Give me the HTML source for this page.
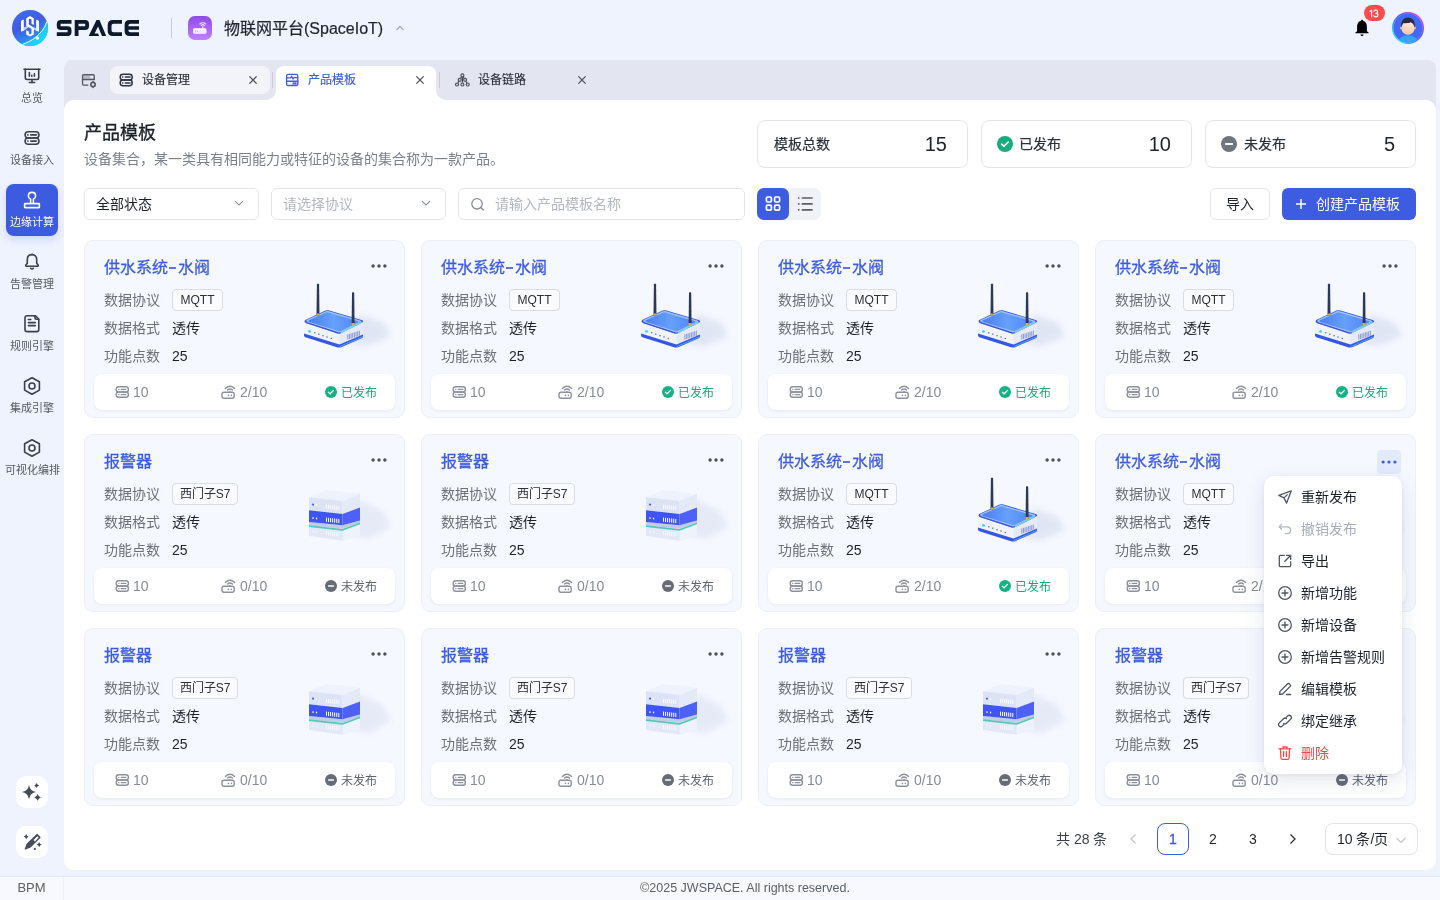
<!DOCTYPE html>
<html lang="zh-CN">
<head>
<meta charset="utf-8">
<style>
*{box-sizing:border-box;margin:0;padding:0}
html,body{width:1440px;height:900px;overflow:hidden}
body{position:relative;background:#eff3fe;font-family:"Liberation Sans",sans-serif;color:#1d2129;font-size:14px;line-height:1}
.abs{position:absolute}
svg{display:block}
.side-label{position:absolute;left:0;width:64px;text-align:center;font-size:11px;color:#535862;line-height:12px}
.side-ico{position:absolute;left:20px;width:24px;height:24px}
.stat{position:absolute;top:120px;width:211px;height:48px;border:1px solid #e3e4f0;border-radius:8px;background:#fff}
.stat-l{position:absolute;top:15px;font-size:14px;line-height:16px;color:#2b2f36;-webkit-text-stroke:.2px #2b2f36}
.stat-n{position:absolute;right:20px;top:13px;font-size:20px;line-height:20px;color:#1d2129}
.sel{position:absolute;top:188px;width:175px;height:32px;border:1px solid #e1e3ee;border-radius:6px;background:#fff;font-size:14px;line-height:30px;padding-left:11px}
.card{position:absolute;width:321px;height:178px;border-radius:9px;background:#f5f8ff;border:1px solid #eceffb}
.card .ct{position:absolute;left:19px;top:17px;font-size:16px;line-height:20px;color:#3d5ce0;-webkit-text-stroke:.3px #3d5ce0;white-space:nowrap}
.card .more{position:absolute;left:282px;top:13px;width:24px;height:24px;border-radius:4px}
.card .lb{position:absolute;left:19px;margin-top:-2px;font-size:14px;line-height:16px;color:#6b7079}
.card .vl{position:absolute;left:87px;margin-top:-2px;font-size:14px;line-height:16px;color:#1d2129}
.card .tag{position:absolute;left:87px;top:48px;height:22px;border:1px solid #d9dce5;border-radius:4px;font-size:12px;line-height:20px;text-align:center;color:#2b2f36;background:#f9fbff}
.card .cf{position:absolute;left:9px;top:133px;width:301px;height:36px;border-radius:8px;background:#fff;box-shadow:0 1px 3px rgba(40,50,90,.08)}
.mi{position:absolute;left:0;width:138px;height:32px;padding-left:37px;font-size:14px;line-height:32px;color:#1d2129;white-space:nowrap}
.mic{position:absolute;left:13px;top:8px;width:16px;height:16px}
</style>
</head>
<body style="will-change:transform">

<!-- HEADER -->
<div class="abs" style="left:12px;top:10px;width:36px;height:36px">
<svg width="36" height="36" viewBox="0 0 36 36">
<defs>
<linearGradient id="lg1" x1="0.25" y1="0" x2="0.75" y2="1">
<stop offset="0" stop-color="#3b6eec"/><stop offset="0.4" stop-color="#4359e2"/><stop offset="0.7" stop-color="#2f86ee"/><stop offset="1" stop-color="#17c9f6"/></linearGradient>
<linearGradient id="lg2" x1="0" y1="0" x2="1" y2="1"><stop offset="0" stop-color="#2aa8f2"/><stop offset="1" stop-color="#0ef0fb"/></linearGradient>
<clipPath id="lgc"><circle cx="18" cy="18" r="18"/></clipPath>
</defs>
<circle cx="18" cy="18" r="18" fill="url(#lg1)"/>
<path clip-path="url(#lgc)" d="M10.9 34.2 C18 32 31 24.5 34.8 11.6 L40 11 L40 40 L8 40 Z" fill="url(#lg2)"/>
<path d="M10.9 34.2 C18 32 31 24.5 34.8 11.6" stroke="#fff" stroke-width="1" fill="none"/>
<circle cx="25.3" cy="28" r="1.8" fill="#fff"/>
<g fill="#fff">
<path d="M18 6 L21.8 8.2 L21.8 15 L19.5 13.7 L19.5 9.4 L18 8.6 L16.8 9.3 L16.8 14.6 L21.8 17.4 L21.8 24.4 L18 26.6 L14.2 24.4 L14.2 20.2 L16.8 21.6 L16.8 23.7 L18 24.4 L19.5 23.6 L19.5 18.8 L14.2 15.8 L14.2 8.2 Z"/>
<path d="M9 11 L10.8 9.7 L11.8 9.7 L11.8 20.8 L9 21.8 Z"/>
<path d="M24.2 9.7 L25.2 9.7 L27 11 L27 21.8 L24.2 20.8 Z"/>
<path d="M11.8 17.6 L16.2 15.4 L16.2 17.6 L11.8 20.8 Z" opacity=".7"/>
<path d="M21.8 17.2 L24.2 18.4 L24.2 20.8 L21.8 19.6 Z" opacity=".7"/>
</g>
</svg>
</div>
<div class="abs" style="left:56px;top:20px;width:84px;height:16px">
<svg width="84" height="16" viewBox="0 0 84 16" fill="#0c1a2c">
<path d="M15.5 0 L4.8 0 Q0.8 0 0.8 4 L0.8 6.2 Q0.8 10 4.8 10 L11.6 10 L11.6 12.2 L0.8 12.2 L0.8 16 L11.6 16 Q15.5 16 15.5 12 L15.5 10.2 Q15.5 6.3 11.6 6.3 L4.6 6.3 L4.6 3.8 L15.5 3.8 Z"/>
<path fill-rule="evenodd" d="M18.7 0 L29 0 Q33 0 33 4 L33 6 Q33 10 29 10 L22.5 10 L22.5 16 L18.7 16 Z M22.5 3.8 L29.2 3.8 L29.2 6.2 L22.5 6.2 Z"/>
<path d="M40.5 0 L43.5 0 L50.2 16 L46 16 L42 6.5 L38.6 13.5 L42 13.5 L43 16 L32.7 16 Z"/>
<path d="M66 0 L57 0 Q51.7 0 51.7 5 L51.7 11 Q51.7 16 57 16 L66 16 L66 12.2 L57.5 12.2 Q55.5 12.2 55.5 10.2 L55.5 5.8 Q55.5 3.8 57.5 3.8 L66 3.8 Z"/>
<path d="M83 0 L73.6 0 Q68.6 0 68.6 5 L68.6 11 Q68.6 16 73.6 16 L83 16 L83 12.2 L74.4 12.2 Q72.4 12.2 72.4 10.2 L72.4 9.8 L83 9.8 L83 6.3 L72.4 6.3 L72.4 5.8 Q72.4 3.8 74.4 3.8 L83 3.8 Z"/>
</svg>
</div>
<div class="abs" style="left:171px;top:18px;width:1px;height:20px;background:#c9ccd6"></div>
<div class="abs" style="left:188px;top:16px;width:24px;height:24px;border-radius:7px;background:linear-gradient(180deg,#8d4ae8,#c282f4)">
<svg width="24" height="24" viewBox="0 0 24 24">
<defs><linearGradient id="pbox" x1="0" y1="0" x2="0" y2="1"><stop offset="0" stop-color="#fff"/><stop offset="1" stop-color="#f3dcfb"/></linearGradient></defs>
<rect x="5" y="12.3" width="13.5" height="5.6" rx="1.6" fill="url(#pbox)"/>
<circle cx="7.4" cy="15.1" r=".55" fill="#b98af0"/><circle cx="9.4" cy="15.1" r=".55" fill="#b98af0"/>
<path d="M14.8 12.4 V10.2" stroke="#f2e6fc" stroke-width="1.3"/>
<path d="M13.3 9.3 A2.1 2.1 0 0 1 16.3 9.3 M11.9 8 A4 4 0 0 1 17.7 8" stroke="#f2e6fc" stroke-width="1.1" fill="none" stroke-linecap="round"/>
</svg>
</div>
<div class="abs" style="left:224px;top:19px;font-size:16px;line-height:20px;color:#1f232b;-webkit-text-stroke:.2px #1f232b;white-space:nowrap">物联网平台(SpaceIoT)</div>
<svg class="abs" style="left:395px;top:24px" width="10" height="8" viewBox="0 0 10 8"><path d="M1.5 6 L5 2.5 L8.5 6" stroke="#a8acb5" stroke-width="1.3" fill="none"/></svg>

<!-- bell -->
<svg class="abs" style="left:1354px;top:19px" width="16" height="18" viewBox="0 0 16 18">
<path d="M8 0.8 C8.6 0.8 9 1.2 9 1.8 C11.6 2.4 12.9 4.6 12.9 7.5 L12.9 12.3 L14.6 13.6 C14.9 13.8 14.8 14.3 14.4 14.3 L1.6 14.3 C1.2 14.3 1.1 13.8 1.4 13.6 L3.1 12.3 L3.1 7.5 C3.1 4.6 4.4 2.4 7 1.8 C7 1.2 7.4 0.8 8 0.8 Z" fill="#000"/>
<path d="M6.4 15.4 L9.6 15.4 C9.5 16.3 8.8 16.9 8 16.9 C7.2 16.9 6.5 16.3 6.4 15.4 Z" fill="#000"/>
</svg>
<div class="abs" style="left:1364px;top:5px;width:21px;height:16px;border-radius:8px;background:#fb4b4b">
<svg width="21" height="16" viewBox="0 0 21 16" fill="none" stroke="#fff" stroke-width="1.15" stroke-linecap="round" stroke-linejoin="round">
<path d="M6.2 6.3 L7.6 5.2 V11.8"/>
<path d="M10 6.2 Q10.5 5.1 11.9 5.1 Q13.6 5.1 13.6 6.7 Q13.6 8.3 11.8 8.3 Q13.9 8.3 13.9 10.1 Q13.9 11.9 11.9 11.9 Q10.3 11.9 9.8 10.7"/>
</svg></div>
<!-- avatar -->
<svg class="abs" style="left:1392px;top:12px" width="32" height="32" viewBox="0 0 32 32">
<defs>
<linearGradient id="ring" x1="0.1" y1="0.9" x2="0.9" y2="0.1"><stop offset="0" stop-color="#1ef5e6"/><stop offset=".4" stop-color="#4a7cf7"/><stop offset=".6" stop-color="#6060f5"/><stop offset="1" stop-color="#f23cf0"/></linearGradient>
<linearGradient id="skin" x1="0" y1="0" x2="0" y2="1"><stop offset="0" stop-color="#fde9dc"/><stop offset="1" stop-color="#f9c7ab"/></linearGradient>
<clipPath id="avc"><circle cx="16" cy="16" r="14.6"/></clipPath>
</defs>
<circle cx="16" cy="16" r="15.2" fill="none" stroke="url(#ring)" stroke-width="1.7"/>
<g clip-path="url(#avc)">
<rect width="32" height="32" fill="#4469f7"/>
<ellipse cx="16" cy="31.6" rx="10.6" ry="8.4" fill="#38a3fb"/>
<circle cx="9.3" cy="16" r="1.3" fill="#f6b896"/><circle cx="22.7" cy="16" r="1.3" fill="#f6b896"/>
<ellipse cx="16" cy="16" rx="6.6" ry="6.8" fill="url(#skin)"/>
<path d="M9.3 16 C8.4 9.6 11.4 5.6 16 5.6 C20.6 5.6 23.6 9.6 22.7 16 C22.2 12.8 20.8 11 18.8 10.3 C16.8 11.3 13.4 11.4 11.6 11 C10.4 12 9.7 13.6 9.3 16 Z" fill="#2b2b39"/>
</g>
</svg>
<!-- SIDEBAR -->
<svg class="side-ico" style="top:64px" viewBox="0 0 24 24" fill="none" stroke="#3a3f4a" stroke-width="1.6" stroke-linecap="round" stroke-linejoin="round">
<path d="M4 5.3 H20"/><path d="M5.3 5.3 V13.8 Q5.3 15.5 7 15.5 H17 Q18.7 15.5 18.7 13.8 V5.3"/><path d="M12 15.5 V18.5"/><path d="M9.3 18.5 H14.7"/>
<path d="M9.4 8.5 V12.2 M11.8 11.4 V12.2 M14.4 9.9 V12.2"/>
</svg>
<div class="side-label" style="top:92px">总览</div>

<svg class="side-ico" style="top:126px" viewBox="0 0 24 24" fill="none" stroke="#3a3f4a" stroke-width="1.6" stroke-linecap="round">
<rect x="5.1" y="5.8" width="13.8" height="6.2" rx="3"/><rect x="5.1" y="12" width="13.8" height="6.2" rx="3"/>
<path d="M7.8 8.9 H8 M10.8 8.9 H16.3 M7.8 15.1 H8 M10.8 15.1 H16.3"/>
</svg>
<div class="side-label" style="top:154px">设备接入</div>

<div class="abs" style="left:6px;top:184px;width:52px;height:52px;border-radius:8px;background:#3c5be0;box-shadow:0 4px 8px rgba(60,91,224,.18)"></div>
<svg class="side-ico" style="top:188px" viewBox="0 0 24 24" fill="none" stroke="#fff" stroke-width="1.6" stroke-linejoin="round">
<path d="M10.6 15.4 V11.2 C9.4 10.6 8.4 9.4 8.4 7.9 C8.4 5.9 10 4.4 12 4.4 C14 4.4 15.6 5.9 15.6 7.9 C15.6 9.4 14.6 10.6 13.4 11.2 V15.4"/>
<rect x="4.6" y="15.6" width="14.8" height="4" rx=".6"/>
</svg>
<div class="side-label" style="top:216px;color:#fff">边缘计算</div>

<svg class="side-ico" style="top:250px" viewBox="0 0 24 24" fill="none" stroke="#3a3f4a" stroke-width="1.6" stroke-linejoin="round" stroke-linecap="round">
<path d="M12 4.6 C9 4.6 7.3 6.8 7.3 9.6 V13.2 L5.8 15 Q5.5 16 6.4 16.2 H17.6 Q18.5 16 18.2 15 L16.7 13.2 V9.6 C16.7 6.8 15 4.6 12 4.6 Z"/>
<path d="M10.6 18.3 Q12 19.8 13.4 18.3"/><path d="M12 4.2 V4.6"/>
</svg>
<div class="side-label" style="top:278px">告警管理</div>

<svg class="side-ico" style="top:312px" viewBox="0 0 24 24" fill="none" stroke="#3a3f4a" stroke-width="1.6" stroke-linejoin="round" stroke-linecap="round">
<path d="M15.4 3.7 H7.2 Q5 3.7 5 5.9 V17.4 Q5 19.6 7.2 19.6 H16.6 Q18.8 19.6 18.8 17.4 V7 Z"/>
<path d="M15 3.9 V6 Q15 7.2 16.2 7.2 H18.5"/>
<path d="M8.4 7.5 H10.8 M8.4 10.6 H15.3 M8.4 13.6 H15.3"/>
</svg>
<div class="side-label" style="top:340px">规则引擎</div>

<svg class="side-ico" style="top:374px" viewBox="0 0 24 24" fill="none" stroke="#3a3f4a" stroke-width="1.6" stroke-linejoin="round">
<path d="M12 3.7 L19.4 7.8 V16.1 L12 20.2 L4.6 16.1 V7.8 Z"/><circle cx="12" cy="12" r="3"/>
</svg>
<div class="side-label" style="top:402px">集成引擎</div>

<svg class="side-ico" style="top:436px" viewBox="0 0 24 24" fill="none" stroke="#3a3f4a" stroke-width="1.6" stroke-linejoin="round">
<path d="M12 3.7 L19.4 7.8 V16.1 L12 20.2 L4.6 16.1 V7.8 Z"/><circle cx="12" cy="12" r="3"/>
</svg>
<div class="side-label" style="top:464px">可视化编排</div>

<div class="abs" style="left:16px;top:776px;width:32px;height:32px;border-radius:10px;background:#fff">
<svg width="32" height="32" viewBox="0 0 32 32" fill="#474c57">
<path d="M13 8.8 Q13.936 15.064 20.2 16 Q13.936 16.936 13 23.2 Q12.064 16.936 5.8 16 Q12.064 15.064 13 8.8 Z"/>
<path d="M20.6 6.9 Q21.150000000000002 8.85 23.1 9.4 Q21.150000000000002 9.950000000000001 20.6 11.9 Q20.05 9.950000000000001 18.1 9.4 Q20.05 8.85 20.6 6.9 Z"/>
<path d="M21.6 18.099999999999998 Q22.326 20.674 24.900000000000002 21.4 Q22.326 22.125999999999998 21.6 24.7 Q20.874000000000002 22.125999999999998 18.3 21.4 Q20.874000000000002 20.674 21.6 18.099999999999998 Z"/>
</svg>
</div>
<div class="abs" style="left:16px;top:826px;width:32px;height:32px;border-radius:10px;background:#fff">
<svg width="32" height="32" viewBox="0 0 32 32" fill="#474c57">
<path d="M21.8 8.2 L24.3 10.7 Q24.9 11.3 24.3 11.9 L14.6 21.6 L9.6 23.6 Q8.4 24 8.8 22.8 L10.6 17.8 L20.4 8.2 Q21.1 7.5 21.8 8.2 Z"/>
<path d="M21.3 10.2 L22.7 11.6 L18.9 15.4 L17.5 14 Z" fill="#fff"/>
<path d="M10.2 8.0 Q10.771999999999998 10.027999999999999 12.799999999999999 10.6 Q10.771999999999998 11.172 10.2 13.2 Q9.628 11.172 7.6 10.6 Q9.628 10.027999999999999 10.2 8.0 Z"/>
<path d="M23.2 16.0 Q23.772 18.028000000000002 25.8 18.6 Q23.772 19.172 23.2 21.200000000000003 Q22.628 19.172 20.599999999999998 18.6 Q22.628 18.028000000000002 23.2 16.0 Z"/>
<circle cx="18.8" cy="22.9" r="1.1"/>
</svg>
</div>

<!-- TAB BAR -->
<div class="abs" style="left:64px;top:60px;width:1372px;height:60px;border-radius:8px 8px 0 0;background:#e3e6f1"></div>
<!-- TABS -->
<svg class="abs" style="left:78px;top:70px" width="24" height="24" viewBox="0 0 24 24" fill="none" stroke="#555a65" stroke-width="1.3" stroke-linejoin="round" stroke-linecap="round">
<rect x="5.2" y="5.4" width="10.4" height="3.5" fill="#b9bcc8" stroke="none"/>
<rect x="12.4" y="5.9" width="2.6" height="2.4" fill="#f2f3f8" stroke="none"/>
<path d="M9.9 15.05 H5.6 Q4.55 15.05 4.55 14 V5.8 Q4.55 4.75 5.6 4.75 H15.2 Q16.25 4.75 16.25 5.8 V9.5"/>
<path d="M4.55 9.5 H16.25"/>
<circle cx="15" cy="14.5" r="2.2" stroke-width="1.7"/>
<path d="M15 11.5 V11.9 M15 17.1 V17.5" stroke-width="1.4"/>
</svg>
<div class="abs" style="left:266px;top:90px;width:180px;height:10px;background:#fff"></div>
<div class="abs" style="left:266px;top:90px;width:10px;height:10px;border-bottom-right-radius:10px;background:#e3e6f1"></div>
<div class="abs" style="left:436px;top:90px;width:10px;height:10px;border-bottom-left-radius:10px;background:#e3e6f1"></div>
<div class="abs" style="left:110px;top:66px;width:160px;height:28px;border-radius:8px;background:#f3f4f9"></div>
<svg class="abs" style="left:114px;top:68px" width="24" height="24" viewBox="0 0 24 24" fill="none" stroke="#2e333d" stroke-width="1.5" stroke-linecap="round">
<rect x="6.2" y="6.2" width="12" height="5.8" rx="2.7"/><rect x="6.2" y="12" width="12" height="5.8" rx="2.7"/>
<path d="M8.6 9.1 H8.8 M11.3 9.1 H16 M8.6 14.9 H8.8 M11.3 14.9 H16"/>
</svg>
<div class="abs" style="left:142px;top:73px;font-size:12px;line-height:14px;-webkit-text-stroke:.15px #2b2f38;color:#2b2f38">设备管理</div>
<svg class="abs" style="left:246px;top:73px" width="14" height="14" viewBox="0 0 14 14"><path d="M3.4 3.4 L10.6 10.6 M10.6 3.4 L3.4 10.6" stroke="#4b505a" stroke-width="1.3"/></svg>
<div class="abs" style="left:272px;top:72px;width:1px;height:16px;background:#c9ccd8"></div>

<!-- active tab -->
<div class="abs" style="left:276px;top:66px;width:160px;height:40px;border-radius:8px 8px 0 0;background:#fff"></div>
<svg class="abs" style="left:280px;top:68px" width="24" height="24" viewBox="0 0 24 24" fill="none" stroke="#3d5ce0" stroke-width="1.35" stroke-linejoin="round" stroke-linecap="round">
<rect x="6.6" y="6.3" width="11.2" height="11.2" rx="1.6"/>
<path d="M6.6 13.2 H17.8"/>
<path d="M7 9.8 H10.6 L11.6 8.3 L13 11 L14 9.6 H17.4"/>
<circle cx="13.6" cy="15.4" r=".5" fill="#3d5ce0"/><circle cx="15.5" cy="15.4" r=".5" fill="#3d5ce0"/>
</svg>
<div class="abs" style="left:308px;top:73px;font-size:12px;line-height:14px;-webkit-text-stroke:.15px #3d5ce0;color:#3d5ce0">产品模板</div>
<svg class="abs" style="left:413px;top:73px" width="14" height="14" viewBox="0 0 14 14"><path d="M3.4 3.4 L10.6 10.6 M10.6 3.4 L3.4 10.6" stroke="#4b505a" stroke-width="1.3"/></svg>
<div class="abs" style="left:439px;top:72px;width:1px;height:16px;background:#c9ccd8"></div>

<svg class="abs" style="left:450px;top:68px" width="24" height="24" viewBox="0 0 24 24" fill="none" stroke="#4b505a" stroke-width="1.2">
<circle cx="12.4" cy="7.4" r="1.5"/><circle cx="9.7" cy="11.8" r="1.5"/><circle cx="15.1" cy="11.8" r="1.5"/>
<circle cx="7" cy="16.5" r="1.5"/><circle cx="12.4" cy="16.5" r="1.5"/><circle cx="17.7" cy="16.5" r="1.5"/>
<path d="M11.6 8.7 L10.5 10.5 M13.2 8.7 L14.3 10.5 M12.4 8.9 V15 M8.9 13.1 L7.8 15.2 M15.9 13.1 L17 15.2"/>
</svg>
<div class="abs" style="left:478px;top:73px;font-size:12px;line-height:14px;-webkit-text-stroke:.15px #2b2f38;color:#2b2f38">设备链路</div>
<svg class="abs" style="left:575px;top:73px" width="14" height="14" viewBox="0 0 14 14"><path d="M3.4 3.4 L10.6 10.6 M10.6 3.4 L3.4 10.6" stroke="#4b505a" stroke-width="1.3"/></svg>

<!-- MAIN PANEL -->
<div class="abs" id="panel" style="left:64px;top:100px;width:1372px;height:770px;border-radius:10px;background:#fff"></div>


<!-- PAGE HEADER -->
<div class="abs" style="left:84px;top:123px;font-size:18px;line-height:20px;-webkit-text-stroke:.35px #1d2129;color:#1d2129">产品模板</div>
<div class="abs" style="left:84px;top:151px;font-size:14px;line-height:16px;color:#7b8089;white-space:nowrap">设备集合，某一类具有相同能力或特征的设备的集合称为一款产品。</div>

<div class="stat" style="left:757px">
<span class="stat-l" style="left:16px">模板总数</span><span class="stat-n">15</span></div>
<div class="stat" style="left:981px">
<svg class="abs" style="left:15px;top:15px" width="16" height="16" viewBox="0 0 16 16"><circle cx="8" cy="8" r="8" fill="#1aab7e"/><path d="M4.7 8.2 L7 10.3 L11.2 6" stroke="#fff" stroke-width="1.6" fill="none" stroke-linecap="round" stroke-linejoin="round"/></svg>
<span class="stat-l" style="left:37px">已发布</span><span class="stat-n">10</span></div>
<div class="stat" style="left:1205px">
<svg class="abs" style="left:15px;top:15px" width="16" height="16" viewBox="0 0 16 16"><circle cx="8" cy="8" r="8" fill="#70757e"/><path d="M4.8 8 H11.2" stroke="#fff" stroke-width="1.8" stroke-linecap="round"/></svg>
<span class="stat-l" style="left:38px">未发布</span><span class="stat-n">5</span></div>

<!-- FILTERS -->
<div class="sel" style="left:84px"><span style="color:#1d2129">全部状态</span>
<svg class="abs" style="left:148px;top:8px" width="12" height="12" viewBox="0 0 12 12"><path d="M2 4.2 L6 8 L10 4.2" stroke="#8a8f99" stroke-width="1.1" fill="none"/></svg></div>
<div class="sel" style="left:271px"><span style="color:#b3b7c0">请选择协议</span>
<svg class="abs" style="left:148px;top:8px" width="12" height="12" viewBox="0 0 12 12"><path d="M2 4.2 L6 8 L10 4.2" stroke="#8a8f99" stroke-width="1.1" fill="none"/></svg></div>
<div class="sel" style="left:458px;width:287px;padding-left:36px"><span style="color:#b3b7c0">请输入产品模板名称</span>
<svg class="abs" style="left:11px;top:7px" width="16" height="16" viewBox="0 0 16 16" fill="none" stroke="#868b94" stroke-width="1.3" stroke-linecap="round"><circle cx="7" cy="7.8" r="5.2"/><path d="M10.7 11.5 L13.3 14"/></svg></div>

<div class="abs" style="left:757px;top:188px;width:64px;height:32px;border-radius:7px;background:#f1f2f7"></div>
<div class="abs" style="left:757px;top:188px;width:32px;height:32px;border-radius:7px;background:#3d5ce0">
<svg width="32" height="32" viewBox="0 0 32 32" fill="none" stroke="#fff" stroke-width="1.7"><rect x="9.4" y="9" width="5" height="5" rx="1.3"/><rect x="17.6" y="9" width="5" height="5" rx="1.3"/><rect x="9.4" y="17.2" width="5" height="5" rx="1.3"/><rect x="17.6" y="17.2" width="5" height="5" rx="1.3"/></svg></div>
<svg class="abs" style="left:789px;top:188px" width="32" height="32" viewBox="0 0 32 32" fill="none" stroke="#5a5f69" stroke-width="1.7" stroke-linecap="round"><path d="M9.6 10 H9.8 M9.6 15.9 H9.8 M9.6 21.8 H9.8"/><path d="M13.4 10 H23 M13.4 15.9 H23 M13.4 21.8 H23"/></svg>

<div class="abs" style="left:1210px;top:188px;width:60px;height:32px;border-radius:6px;border:1px solid #e2e4ee;background:#fff;font-size:14px;line-height:30px;text-align:center;color:#1d2129">导入</div>
<div class="abs" style="left:1282px;top:188px;width:134px;height:32px;border-radius:6px;background:#3d5ce0;color:#fff;font-size:14px;line-height:32px;padding-left:34px">创建产品模板
<svg class="abs" style="left:13px;top:10px" width="12" height="12" viewBox="0 0 12 12"><path d="M6 1 V11 M1 6 H11" stroke="#fff" stroke-width="1.5"/></svg></div>


<svg width="0" height="0" style="position:absolute">
<defs>
<linearGradient id="rtop" x1="0" y1="0" x2="1" y2="1"><stop offset="0" stop-color="#3e63f0"/><stop offset=".6" stop-color="#5b8cf7"/><stop offset="1" stop-color="#2f5ae8"/></linearGradient>
<linearGradient id="rside" x1="0" y1="0" x2="1" y2="0"><stop offset="0" stop-color="#f3f5fc"/><stop offset="1" stop-color="#dfe5f6"/></linearGradient>
<radialGradient id="shad" cx=".3" cy=".5" r=".6"><stop offset="0" stop-color="#c4cbe2" stop-opacity=".9"/><stop offset="1" stop-color="#e8ecf8" stop-opacity="0"/></radialGradient>
<filter id="blur3" x="-50%" y="-50%" width="200%" height="200%"><feGaussianBlur stdDeviation="3"/></filter>
<symbol id="router" viewBox="0 0 100 80">
<defs>
<linearGradient id="rglass" x1="0" y1="0" x2="1" y2="0"><stop offset="0" stop-color="#4a7ef2"/><stop offset=".5" stop-color="#66a0fa"/><stop offset="1" stop-color="#4f86f4"/></linearGradient>
</defs>
<path d="M66 36 L90 45 L97 58 L74 68 L54 66 Z" fill="#cdd4ea" opacity=".5" filter="url(#blur3)"/>
<path d="M10 44 L45.5 55.5 L69 44 L69 58 L45.5 68.5 L10 57 Z" fill="#f1f3fb"/>
<path d="M45.5 55.5 L69 44 L69 58 L45.5 68.5 Z" fill="#e6eaf7"/>
<path d="M10 55.4 L45.5 66.6 L69 56.6 L69 58.6 Q69 59.6 67.6 60.3 L47.2 69.2 Q45.5 69.9 43.8 69.4 L11.4 59.2 Q10 58.6 10 57.5 Z" fill="#3556e6"/>
<path d="M45.8 68.6 L68.6 58.6" stroke="#5fc0ff" stroke-width=".8" opacity=".9"/>
<path d="M11.2 42 L31.5 32.6 Q33 31.9 34.6 32.3 L67.6 42.1 Q70.2 43 68.4 44.4 L47.4 55.1 Q45.6 56 43.8 55.4 L11.8 44.9 Q9.5 43.9 11.2 42 Z" fill="#3a58e4"/>
<path d="M12.6 42 L31.8 33.3 Q33 32.8 34.3 33.1 L66.4 42.5 Q68 43.1 66.8 43.9 L46.9 54 Q45.6 54.7 44.2 54.2 L13.4 44.3 Q11.6 43.4 12.6 42 Z" fill="#9cc3fd"/>
<path d="M14.5 42.6 L32.2 34.6 Q33.1 34.2 34.1 34.5 L64.2 43.2 Q65.4 43.6 64.4 44.2 L46.6 53 Q45.6 53.5 44.5 53.1 L15.3 44.1 Q13.9 43.5 14.5 42.6 Z" fill="url(#rglass)"/>
<path d="M47 54.6 L67.6 44" stroke="#7fe6ff" stroke-width="1.2" opacity=".9"/>
<path d="M12 44.6 L44.2 55.2" stroke="#3a50d8" stroke-width=".9" opacity=".8"/>
<circle cx="15.5" cy="53.4" r="1.35" fill="#3ad6f8"/>
<g fill="#4d5570"><rect x="20.2" y="54.2" width="1.2" height="1.2"/><rect x="24.2" y="55.6" width="1.2" height="1.2"/><rect x="28.4" y="57.1" width="1.2" height="1.2"/><rect x="32.4" y="58.4" width="1.2" height="1.2"/><rect x="36.6" y="59.9" width="1.2" height="1.2"/></g>
<g stroke="#8b98d0" stroke-width="1"><path d="M53.80 56.40 V61.60"/><path d="M55.45 55.87 V61.07"/><path d="M57.10 55.34 V60.54"/><path d="M58.75 54.82 V60.02"/><path d="M60.40 54.29 V59.49"/><path d="M62.05 53.76 V58.96"/><path d="M63.70 53.23 V58.43"/><path d="M65.35 52.70 V57.90"/></g>
<path d="M22.5 37.4 L22.9 6.6 Q24 4.6 25.1 6.6 L25.5 37.4 Z" fill="#2b3859"/>
<rect x="22.3" y="35.4" width="3.4" height="2" rx=".5" fill="#d9b13a"/>
<path d="M57.6 47 L58 15 Q59.1 13 60.2 15 L60.6 47 Z" fill="#2b3859"/>
<rect x="57.4" y="45" width="3.4" height="2" rx=".5" fill="#d9b13a"/>
</symbol>
<symbol id="server" viewBox="0 0 100 80">
<path d="M62 26 L88 38 L96 54 L74 66 L58 64 Z" fill="#cdd4ea" opacity=".38" filter="url(#blur3)"/>
<path d="M14 24.3 L31.4 17 L65 20.7 L47.6 28 Z" fill="#edf2fd"/>
<path d="M14 24.3 L47.6 28 L47.6 41 L14 37.3 Z" fill="#dce3f5"/>
<path d="M47.6 28 L65 20.7 L65 34.5 L47.6 41 Z" fill="#e5eafa"/>
<path d="M14 52.2 L47.6 56 L65 49.6 L65 62.6 L47.6 67.7 L14 63 Z" fill="#e3e8f7"/>
<path d="M47.6 56 L65 49.6 L65 62.6 L47.6 67.7 Z" fill="#eef2fc"/>
<path d="M14 48.9 L47.6 52.2 L65 47.5 L65 49.8 L47.6 55.8 L14 52.4 Z" fill="#c3cbe9"/>
<path d="M14 52.2 L47.6 55.9 L65 49.6 L65 51.2 L47.6 57.7 L14 54 Z" fill="#52c9b4"/>
<path d="M14 37.3 L47.6 41 L47.6 52.2 L14 48.9 Z" fill="#3f55f3"/>
<path d="M47.6 41 L65 34.5 L65 47.5 L47.6 52.2 Z" fill="#4e61f7"/>
<circle cx="18" cy="31.6" r="1.1" fill="#4a5ef0"/><rect x="20.8" y="31.2" width="1.2" height="1.6" fill="#fff"/>
<g stroke="#fff" stroke-width="0.9" opacity="0.9"><path d="M31.50 31.60 V35.80"/><path d="M33.55 31.82 V36.02"/><path d="M35.60 32.04 V36.24"/><path d="M37.65 32.26 V36.46"/><path d="M39.70 32.48 V36.68"/><path d="M41.75 32.70 V36.90"/><path d="M43.80 32.92 V37.12"/></g>
<rect x="17.4" y="44.3" width="1.3" height="1.6" fill="#fff"/><rect x="20.9" y="44.7" width="1.3" height="1.6" fill="#fff"/>
<g stroke="#fff" stroke-width="1" opacity="1"><path d="M31.50 44.60 V48.80"/><path d="M33.55 44.82 V49.02"/><path d="M35.60 45.04 V49.24"/><path d="M37.65 45.26 V49.46"/><path d="M39.70 45.48 V49.68"/><path d="M41.75 45.70 V49.90"/><path d="M43.80 45.92 V50.12"/></g>
<rect x="17.4" y="57.8" width="1.2" height="1.5" fill="#fff" opacity=".8"/><rect x="20.9" y="58.1" width="1.2" height="1.5" fill="#fff" opacity=".8"/>
<g stroke="#fff" stroke-width="0.9" opacity="0.75"><path d="M31.50 58.00 V62.20"/><path d="M33.55 58.22 V62.42"/><path d="M35.60 58.44 V62.64"/><path d="M37.65 58.66 V62.86"/><path d="M39.70 58.88 V63.08"/><path d="M41.75 59.10 V63.30"/><path d="M43.80 59.32 V63.52"/></g>
</symbol>
<symbol id="ico-srv" viewBox="0 0 24 24"><g fill="none" stroke="#8c919b" stroke-width="1.4" stroke-linecap="round"><rect x="5.2" y="6.7" width="12.2" height="5.3" rx="2.5"/><rect x="5.2" y="12" width="12.2" height="5.3" rx="2.5"/><path d="M7.7 9.35 H7.9 M10.2 9.35 H14.8 M7.7 14.65 H7.9 M10.2 14.65 H14.8"/></g></symbol>
<symbol id="ico-rtr" viewBox="0 0 24 24"><g fill="none" stroke="#8c919b" stroke-width="1.4" stroke-linecap="round"><rect x="6" y="12.3" width="12.2" height="6" rx="2"/><path d="M14 12.3 V11.4"/><path d="M11.6 10 Q14 7.9 16.4 10"/><path d="M9.4 8.4 Q14 4.3 18.6 8.4"/></g><circle cx="12.4" cy="15.4" r=".8" fill="#8c919b"/><circle cx="15.4" cy="15.4" r=".8" fill="#8c919b"/></symbol>
<symbol id="ico-ok" viewBox="0 0 12 12"><circle cx="6" cy="6" r="6" fill="#13b386"/><path d="M3.3 6.3 L5.1 7.8 L8.5 4.4" stroke="#fff" stroke-width="1.3" fill="none" stroke-linecap="round" stroke-linejoin="round"/></symbol>
<symbol id="ico-no" viewBox="0 0 12 12"><circle cx="6" cy="6" r="6" fill="#666b75"/><path d="M3.6 6 H8.4" stroke="#fff" stroke-width="1.5" stroke-linecap="round"/></symbol>
</defs>
</svg>

<!-- CARDS -->
<div class="card" style="left:84px;top:240px">
<div class="ct">供水系统<span style="display:inline-block;width:7px;height:2px;background:#5b75e6;margin:9px 1.3px 0;vertical-align:top"></span>水阀</div>
<div class="more" style=""><svg width="24" height="24" viewBox="0 0 24 24" fill="#4b515c"><circle cx="6.1" cy="12" r="1.7"/><circle cx="12" cy="12" r="1.7"/><circle cx="17.9" cy="12" r="1.7"/></svg></div>
<div class="lb" style="top:53px">数据协议</div><div class="tag" style="width:51px">MQTT</div>
<div class="lb" style="top:81px">数据格式</div><div class="vl" style="top:81px">透传</div>
<div class="lb" style="top:109px">功能点数</div><div class="vl" style="top:109px">25</div>
<svg class="abs" style="left:209px;top:37px" width="100" height="80"><use href="#router"/></svg>
<div class="cf">
<svg class="abs" style="left:17px;top:6px" width="24" height="24"><use href="#ico-srv"/></svg><span class="abs" style="left:39px;top:10px;font-size:14px;line-height:16px;color:#868b94">10</span>
<svg class="abs" style="left:122px;top:6px" width="24" height="24"><use href="#ico-rtr"/></svg><span class="abs" style="left:146px;top:10px;font-size:14px;line-height:16px;color:#868b94">2/10</span>
<svg class="abs" style="left:231px;top:12px" width="12" height="12"><use href="#ico-ok"/></svg><span class="abs" style="left:247px;top:12px;font-size:12px;line-height:14px;color:#19a97b">已发布</span>
</div>
</div>
<div class="card" style="left:421px;top:240px">
<div class="ct">供水系统<span style="display:inline-block;width:7px;height:2px;background:#5b75e6;margin:9px 1.3px 0;vertical-align:top"></span>水阀</div>
<div class="more" style=""><svg width="24" height="24" viewBox="0 0 24 24" fill="#4b515c"><circle cx="6.1" cy="12" r="1.7"/><circle cx="12" cy="12" r="1.7"/><circle cx="17.9" cy="12" r="1.7"/></svg></div>
<div class="lb" style="top:53px">数据协议</div><div class="tag" style="width:51px">MQTT</div>
<div class="lb" style="top:81px">数据格式</div><div class="vl" style="top:81px">透传</div>
<div class="lb" style="top:109px">功能点数</div><div class="vl" style="top:109px">25</div>
<svg class="abs" style="left:209px;top:37px" width="100" height="80"><use href="#router"/></svg>
<div class="cf">
<svg class="abs" style="left:17px;top:6px" width="24" height="24"><use href="#ico-srv"/></svg><span class="abs" style="left:39px;top:10px;font-size:14px;line-height:16px;color:#868b94">10</span>
<svg class="abs" style="left:122px;top:6px" width="24" height="24"><use href="#ico-rtr"/></svg><span class="abs" style="left:146px;top:10px;font-size:14px;line-height:16px;color:#868b94">2/10</span>
<svg class="abs" style="left:231px;top:12px" width="12" height="12"><use href="#ico-ok"/></svg><span class="abs" style="left:247px;top:12px;font-size:12px;line-height:14px;color:#19a97b">已发布</span>
</div>
</div>
<div class="card" style="left:758px;top:240px">
<div class="ct">供水系统<span style="display:inline-block;width:7px;height:2px;background:#5b75e6;margin:9px 1.3px 0;vertical-align:top"></span>水阀</div>
<div class="more" style=""><svg width="24" height="24" viewBox="0 0 24 24" fill="#4b515c"><circle cx="6.1" cy="12" r="1.7"/><circle cx="12" cy="12" r="1.7"/><circle cx="17.9" cy="12" r="1.7"/></svg></div>
<div class="lb" style="top:53px">数据协议</div><div class="tag" style="width:51px">MQTT</div>
<div class="lb" style="top:81px">数据格式</div><div class="vl" style="top:81px">透传</div>
<div class="lb" style="top:109px">功能点数</div><div class="vl" style="top:109px">25</div>
<svg class="abs" style="left:209px;top:37px" width="100" height="80"><use href="#router"/></svg>
<div class="cf">
<svg class="abs" style="left:17px;top:6px" width="24" height="24"><use href="#ico-srv"/></svg><span class="abs" style="left:39px;top:10px;font-size:14px;line-height:16px;color:#868b94">10</span>
<svg class="abs" style="left:122px;top:6px" width="24" height="24"><use href="#ico-rtr"/></svg><span class="abs" style="left:146px;top:10px;font-size:14px;line-height:16px;color:#868b94">2/10</span>
<svg class="abs" style="left:231px;top:12px" width="12" height="12"><use href="#ico-ok"/></svg><span class="abs" style="left:247px;top:12px;font-size:12px;line-height:14px;color:#19a97b">已发布</span>
</div>
</div>
<div class="card" style="left:1095px;top:240px">
<div class="ct">供水系统<span style="display:inline-block;width:7px;height:2px;background:#5b75e6;margin:9px 1.3px 0;vertical-align:top"></span>水阀</div>
<div class="more" style=""><svg width="24" height="24" viewBox="0 0 24 24" fill="#4b515c"><circle cx="6.1" cy="12" r="1.7"/><circle cx="12" cy="12" r="1.7"/><circle cx="17.9" cy="12" r="1.7"/></svg></div>
<div class="lb" style="top:53px">数据协议</div><div class="tag" style="width:51px">MQTT</div>
<div class="lb" style="top:81px">数据格式</div><div class="vl" style="top:81px">透传</div>
<div class="lb" style="top:109px">功能点数</div><div class="vl" style="top:109px">25</div>
<svg class="abs" style="left:209px;top:37px" width="100" height="80"><use href="#router"/></svg>
<div class="cf">
<svg class="abs" style="left:17px;top:6px" width="24" height="24"><use href="#ico-srv"/></svg><span class="abs" style="left:39px;top:10px;font-size:14px;line-height:16px;color:#868b94">10</span>
<svg class="abs" style="left:122px;top:6px" width="24" height="24"><use href="#ico-rtr"/></svg><span class="abs" style="left:146px;top:10px;font-size:14px;line-height:16px;color:#868b94">2/10</span>
<svg class="abs" style="left:231px;top:12px" width="12" height="12"><use href="#ico-ok"/></svg><span class="abs" style="left:247px;top:12px;font-size:12px;line-height:14px;color:#19a97b">已发布</span>
</div>
</div>
<div class="card" style="left:84px;top:434px">
<div class="ct">报警器</div>
<div class="more" style=""><svg width="24" height="24" viewBox="0 0 24 24" fill="#4b515c"><circle cx="6.1" cy="12" r="1.7"/><circle cx="12" cy="12" r="1.7"/><circle cx="17.9" cy="12" r="1.7"/></svg></div>
<div class="lb" style="top:53px">数据协议</div><div class="tag" style="width:66px">西门子S7</div>
<div class="lb" style="top:81px">数据格式</div><div class="vl" style="top:81px">透传</div>
<div class="lb" style="top:109px">功能点数</div><div class="vl" style="top:109px">25</div>
<svg class="abs" style="left:210px;top:38px" width="100" height="80"><use href="#server"/></svg>
<div class="cf">
<svg class="abs" style="left:17px;top:6px" width="24" height="24"><use href="#ico-srv"/></svg><span class="abs" style="left:39px;top:10px;font-size:14px;line-height:16px;color:#868b94">10</span>
<svg class="abs" style="left:122px;top:6px" width="24" height="24"><use href="#ico-rtr"/></svg><span class="abs" style="left:146px;top:10px;font-size:14px;line-height:16px;color:#868b94">0/10</span>
<svg class="abs" style="left:231px;top:12px" width="12" height="12"><use href="#ico-no"/></svg><span class="abs" style="left:247px;top:12px;font-size:12px;line-height:14px;color:#5f646d">未发布</span>
</div>
</div>
<div class="card" style="left:421px;top:434px">
<div class="ct">报警器</div>
<div class="more" style=""><svg width="24" height="24" viewBox="0 0 24 24" fill="#4b515c"><circle cx="6.1" cy="12" r="1.7"/><circle cx="12" cy="12" r="1.7"/><circle cx="17.9" cy="12" r="1.7"/></svg></div>
<div class="lb" style="top:53px">数据协议</div><div class="tag" style="width:66px">西门子S7</div>
<div class="lb" style="top:81px">数据格式</div><div class="vl" style="top:81px">透传</div>
<div class="lb" style="top:109px">功能点数</div><div class="vl" style="top:109px">25</div>
<svg class="abs" style="left:210px;top:38px" width="100" height="80"><use href="#server"/></svg>
<div class="cf">
<svg class="abs" style="left:17px;top:6px" width="24" height="24"><use href="#ico-srv"/></svg><span class="abs" style="left:39px;top:10px;font-size:14px;line-height:16px;color:#868b94">10</span>
<svg class="abs" style="left:122px;top:6px" width="24" height="24"><use href="#ico-rtr"/></svg><span class="abs" style="left:146px;top:10px;font-size:14px;line-height:16px;color:#868b94">0/10</span>
<svg class="abs" style="left:231px;top:12px" width="12" height="12"><use href="#ico-no"/></svg><span class="abs" style="left:247px;top:12px;font-size:12px;line-height:14px;color:#5f646d">未发布</span>
</div>
</div>
<div class="card" style="left:758px;top:434px">
<div class="ct">供水系统<span style="display:inline-block;width:7px;height:2px;background:#5b75e6;margin:9px 1.3px 0;vertical-align:top"></span>水阀</div>
<div class="more" style=""><svg width="24" height="24" viewBox="0 0 24 24" fill="#4b515c"><circle cx="6.1" cy="12" r="1.7"/><circle cx="12" cy="12" r="1.7"/><circle cx="17.9" cy="12" r="1.7"/></svg></div>
<div class="lb" style="top:53px">数据协议</div><div class="tag" style="width:51px">MQTT</div>
<div class="lb" style="top:81px">数据格式</div><div class="vl" style="top:81px">透传</div>
<div class="lb" style="top:109px">功能点数</div><div class="vl" style="top:109px">25</div>
<svg class="abs" style="left:209px;top:37px" width="100" height="80"><use href="#router"/></svg>
<div class="cf">
<svg class="abs" style="left:17px;top:6px" width="24" height="24"><use href="#ico-srv"/></svg><span class="abs" style="left:39px;top:10px;font-size:14px;line-height:16px;color:#868b94">10</span>
<svg class="abs" style="left:122px;top:6px" width="24" height="24"><use href="#ico-rtr"/></svg><span class="abs" style="left:146px;top:10px;font-size:14px;line-height:16px;color:#868b94">2/10</span>
<svg class="abs" style="left:231px;top:12px" width="12" height="12"><use href="#ico-ok"/></svg><span class="abs" style="left:247px;top:12px;font-size:12px;line-height:14px;color:#19a97b">已发布</span>
</div>
</div>
<div class="card" style="left:1095px;top:434px">
<div class="ct">供水系统<span style="display:inline-block;width:7px;height:2px;background:#5b75e6;margin:9px 1.3px 0;vertical-align:top"></span>水阀</div>
<div class="more" style="background:#e4eafd;left:281px;top:15px"><svg width="24" height="24" viewBox="0 0 24 24" fill="#3d5ce0"><circle cx="6.1" cy="12" r="1.6"/><circle cx="12" cy="12" r="1.6"/><circle cx="17.9" cy="12" r="1.6"/></svg></div>
<div class="lb" style="top:53px">数据协议</div><div class="tag" style="width:51px">MQTT</div>
<div class="lb" style="top:81px">数据格式</div><div class="vl" style="top:81px">透传</div>
<div class="lb" style="top:109px">功能点数</div><div class="vl" style="top:109px">25</div>
<svg class="abs" style="left:209px;top:37px" width="100" height="80"><use href="#router"/></svg>
<div class="cf">
<svg class="abs" style="left:17px;top:6px" width="24" height="24"><use href="#ico-srv"/></svg><span class="abs" style="left:39px;top:10px;font-size:14px;line-height:16px;color:#868b94">10</span>
<svg class="abs" style="left:122px;top:6px" width="24" height="24"><use href="#ico-rtr"/></svg><span class="abs" style="left:146px;top:10px;font-size:14px;line-height:16px;color:#868b94">2/10</span>
<svg class="abs" style="left:231px;top:12px" width="12" height="12"><use href="#ico-ok"/></svg><span class="abs" style="left:247px;top:12px;font-size:12px;line-height:14px;color:#19a97b">已发布</span>
</div>
</div>
<div class="card" style="left:84px;top:628px">
<div class="ct">报警器</div>
<div class="more" style=""><svg width="24" height="24" viewBox="0 0 24 24" fill="#4b515c"><circle cx="6.1" cy="12" r="1.7"/><circle cx="12" cy="12" r="1.7"/><circle cx="17.9" cy="12" r="1.7"/></svg></div>
<div class="lb" style="top:53px">数据协议</div><div class="tag" style="width:66px">西门子S7</div>
<div class="lb" style="top:81px">数据格式</div><div class="vl" style="top:81px">透传</div>
<div class="lb" style="top:109px">功能点数</div><div class="vl" style="top:109px">25</div>
<svg class="abs" style="left:210px;top:38px" width="100" height="80"><use href="#server"/></svg>
<div class="cf">
<svg class="abs" style="left:17px;top:6px" width="24" height="24"><use href="#ico-srv"/></svg><span class="abs" style="left:39px;top:10px;font-size:14px;line-height:16px;color:#868b94">10</span>
<svg class="abs" style="left:122px;top:6px" width="24" height="24"><use href="#ico-rtr"/></svg><span class="abs" style="left:146px;top:10px;font-size:14px;line-height:16px;color:#868b94">0/10</span>
<svg class="abs" style="left:231px;top:12px" width="12" height="12"><use href="#ico-no"/></svg><span class="abs" style="left:247px;top:12px;font-size:12px;line-height:14px;color:#5f646d">未发布</span>
</div>
</div>
<div class="card" style="left:421px;top:628px">
<div class="ct">报警器</div>
<div class="more" style=""><svg width="24" height="24" viewBox="0 0 24 24" fill="#4b515c"><circle cx="6.1" cy="12" r="1.7"/><circle cx="12" cy="12" r="1.7"/><circle cx="17.9" cy="12" r="1.7"/></svg></div>
<div class="lb" style="top:53px">数据协议</div><div class="tag" style="width:66px">西门子S7</div>
<div class="lb" style="top:81px">数据格式</div><div class="vl" style="top:81px">透传</div>
<div class="lb" style="top:109px">功能点数</div><div class="vl" style="top:109px">25</div>
<svg class="abs" style="left:210px;top:38px" width="100" height="80"><use href="#server"/></svg>
<div class="cf">
<svg class="abs" style="left:17px;top:6px" width="24" height="24"><use href="#ico-srv"/></svg><span class="abs" style="left:39px;top:10px;font-size:14px;line-height:16px;color:#868b94">10</span>
<svg class="abs" style="left:122px;top:6px" width="24" height="24"><use href="#ico-rtr"/></svg><span class="abs" style="left:146px;top:10px;font-size:14px;line-height:16px;color:#868b94">0/10</span>
<svg class="abs" style="left:231px;top:12px" width="12" height="12"><use href="#ico-no"/></svg><span class="abs" style="left:247px;top:12px;font-size:12px;line-height:14px;color:#5f646d">未发布</span>
</div>
</div>
<div class="card" style="left:758px;top:628px">
<div class="ct">报警器</div>
<div class="more" style=""><svg width="24" height="24" viewBox="0 0 24 24" fill="#4b515c"><circle cx="6.1" cy="12" r="1.7"/><circle cx="12" cy="12" r="1.7"/><circle cx="17.9" cy="12" r="1.7"/></svg></div>
<div class="lb" style="top:53px">数据协议</div><div class="tag" style="width:66px">西门子S7</div>
<div class="lb" style="top:81px">数据格式</div><div class="vl" style="top:81px">透传</div>
<div class="lb" style="top:109px">功能点数</div><div class="vl" style="top:109px">25</div>
<svg class="abs" style="left:210px;top:38px" width="100" height="80"><use href="#server"/></svg>
<div class="cf">
<svg class="abs" style="left:17px;top:6px" width="24" height="24"><use href="#ico-srv"/></svg><span class="abs" style="left:39px;top:10px;font-size:14px;line-height:16px;color:#868b94">10</span>
<svg class="abs" style="left:122px;top:6px" width="24" height="24"><use href="#ico-rtr"/></svg><span class="abs" style="left:146px;top:10px;font-size:14px;line-height:16px;color:#868b94">0/10</span>
<svg class="abs" style="left:231px;top:12px" width="12" height="12"><use href="#ico-no"/></svg><span class="abs" style="left:247px;top:12px;font-size:12px;line-height:14px;color:#5f646d">未发布</span>
</div>
</div>
<div class="card" style="left:1095px;top:628px">
<div class="ct">报警器</div>
<div class="more" style=""><svg width="24" height="24" viewBox="0 0 24 24" fill="#4b515c"><circle cx="6.1" cy="12" r="1.7"/><circle cx="12" cy="12" r="1.7"/><circle cx="17.9" cy="12" r="1.7"/></svg></div>
<div class="lb" style="top:53px">数据协议</div><div class="tag" style="width:66px">西门子S7</div>
<div class="lb" style="top:81px">数据格式</div><div class="vl" style="top:81px">透传</div>
<div class="lb" style="top:109px">功能点数</div><div class="vl" style="top:109px">25</div>
<svg class="abs" style="left:210px;top:38px" width="100" height="80"><use href="#server"/></svg>
<div class="cf">
<svg class="abs" style="left:17px;top:6px" width="24" height="24"><use href="#ico-srv"/></svg><span class="abs" style="left:39px;top:10px;font-size:14px;line-height:16px;color:#868b94">10</span>
<svg class="abs" style="left:122px;top:6px" width="24" height="24"><use href="#ico-rtr"/></svg><span class="abs" style="left:146px;top:10px;font-size:14px;line-height:16px;color:#868b94">0/10</span>
<svg class="abs" style="left:231px;top:12px" width="12" height="12"><use href="#ico-no"/></svg><span class="abs" style="left:247px;top:12px;font-size:12px;line-height:14px;color:#5f646d">未发布</span>
</div>
</div>

<!-- MENU -->
<div class="abs" style="left:1264px;top:476px;width:138px;height:298px;border-radius:10px;background:#fff;box-shadow:0 6px 20px rgba(40,55,110,.13),0 1px 4px rgba(40,55,110,.06)">
<div class="mi" style="top:5px"><svg class="mic" viewBox="0 0 16 16" fill="none" stroke="#50555e" stroke-width="1.3" stroke-linejoin="round"><path d="M14.2 1.9 L1.8 6.3 L7 8.9 L9.6 14.1 Z"/><path d="M7 8.9 L10.6 5.4"/></svg>重新发布</div>
<div class="mi" style="top:37px;color:#a9adb5"><svg class="mic" viewBox="0 0 16 16" fill="none" stroke="#b4b8c0" stroke-width="1.3" stroke-linecap="round" stroke-linejoin="round"><path d="M4.6 3.4 L2.2 5.8 L4.6 8.2"/><path d="M2.4 5.8 H10.2 Q13.6 5.8 13.6 9.2 Q13.6 12.6 10.2 12.6 H8.6"/></svg>撤销发布</div>
<div class="mi" style="top:69px"><svg class="mic" viewBox="0 0 16 16" fill="none" stroke="#50555e" stroke-width="1.3" stroke-linecap="round" stroke-linejoin="round"><path d="M7.2 2.3 H3.6 Q2.3 2.3 2.3 3.6 V12.4 Q2.3 13.7 3.6 13.7 H12.4 Q13.7 13.7 13.7 12.4 V8.8"/><path d="M9.6 2.3 H13.7 V6.4 M13.5 2.5 L7.8 8.2"/></svg>导出</div>
<div class="mi" style="top:101px"><svg class="mic" viewBox="0 0 16 16" fill="none" stroke="#50555e" stroke-width="1.3" stroke-linecap="round"><circle cx="8" cy="8" r="6.3"/><path d="M8 5 V11 M5 8 H11"/></svg>新增功能</div>
<div class="mi" style="top:133px"><svg class="mic" viewBox="0 0 16 16" fill="none" stroke="#50555e" stroke-width="1.3" stroke-linecap="round"><circle cx="8" cy="8" r="6.3"/><path d="M8 5 V11 M5 8 H11"/></svg>新增设备</div>
<div class="mi" style="top:165px"><svg class="mic" viewBox="0 0 16 16" fill="none" stroke="#50555e" stroke-width="1.3" stroke-linecap="round"><circle cx="8" cy="8" r="6.3"/><path d="M8 5 V11 M5 8 H11"/></svg>新增告警规则</div>
<div class="mi" style="top:197px"><svg class="mic" viewBox="0 0 16 16" fill="none" stroke="#50555e" stroke-width="1.3" stroke-linecap="round" stroke-linejoin="round"><path d="M2.5 13.4 L3 10.4 L10.4 3 Q11.4 2 12.4 3 L13 3.6 Q14 4.6 13 5.6 L5.6 13 Z"/><path d="M9.5 13.5 H13.6"/></svg>编辑模板</div>
<div class="mi" style="top:229px"><svg class="mic" viewBox="0 0 16 16" fill="none" stroke="#50555e" stroke-width="1.3" stroke-linecap="round"><path d="M9.2 4.4 L10.6 3 Q12.3 1.5 13.8 3 Q15.2 4.6 13.7 6.1 L9.5 10.3 Q8 11.7 6.6 10.4"/><path d="M6.8 11.6 L5.4 13 Q3.7 14.5 2.2 13 Q0.8 11.4 2.3 9.9 L6.5 5.7 Q8 4.3 9.4 5.6"/></svg>绑定继承</div>
<div class="mi" style="top:261px;color:#f5484a"><svg class="mic" viewBox="0 0 16 16" fill="none" stroke="#f5484a" stroke-width="1.3" stroke-linecap="round" stroke-linejoin="round"><path d="M2 3.8 H14 M6 3.6 V2 H10 V3.6"/><path d="M3.4 4 L4 13.2 Q4.1 14.3 5.2 14.3 H10.8 Q11.9 14.3 12 13.2 L12.6 4"/><path d="M6.6 6.6 V11.4 M9.4 6.6 V11.4"/></svg>删除</div>
</div>

<!-- PAGINATION -->
<div class="abs" style="left:1056px;top:831px;font-size:14px;line-height:16px;color:#3a3f47;white-space:nowrap">共 28 条</div>
<svg class="abs" style="left:1125px;top:831px" width="16" height="16" viewBox="0 0 16 16"><path d="M10.5 3.5 L6 8 L10.5 12.5" stroke="#c0c4cc" stroke-width="1.2" fill="none"/></svg>
<div class="abs" style="left:1157px;top:823px;width:32px;height:32px;border:1px solid #3d5ce0;border-radius:8px;text-align:center;font-size:14px;line-height:30px;color:#3d5ce0;-webkit-text-stroke:.35px #3d5ce0">1</div>
<div class="abs" style="left:1197px;top:823px;width:32px;height:32px;text-align:center;font-size:14px;line-height:32px;color:#1d2129">2</div>
<div class="abs" style="left:1237px;top:823px;width:32px;height:32px;text-align:center;font-size:14px;line-height:32px;color:#1d2129">3</div>
<svg class="abs" style="left:1285px;top:831px" width="16" height="16" viewBox="0 0 16 16"><path d="M5.5 3.5 L10 8 L5.5 12.5" stroke="#2b2f36" stroke-width="1.3" fill="none"/></svg>
<div class="abs" style="left:1325px;top:823px;width:93px;height:32px;border:1px solid #e0e2ed;border-radius:8px;font-size:14px;line-height:30px;color:#1d2129;padding-left:11px;white-space:nowrap">10 条/页
<svg class="abs" style="left:68px;top:9px" width="14" height="14" viewBox="0 0 14 14"><path d="M2.5 5 L7 9.5 L11.5 5" stroke="#c0c4cc" stroke-width="1.1" fill="none"/></svg></div>

<!-- FOOTER -->
<div class="abs" style="left:0;top:876px;width:1440px;height:24px;background:#f7f9fe;border-top:1px solid #e3e8f4"></div>
<div class="abs" style="left:63px;top:877px;width:1px;height:23px;background:#eef1f8"></div>
<div class="abs" style="left:0;top:881px;width:63px;text-align:center;font-size:13px;line-height:13px;color:#5b6069">BPM</div>
<div class="abs" style="left:0;top:882px;width:1490px;text-align:center;font-size:12.5px;line-height:13px;color:#5b6069">©2025 JWSPACE. All rights reserved.</div>

</body>
</html>
